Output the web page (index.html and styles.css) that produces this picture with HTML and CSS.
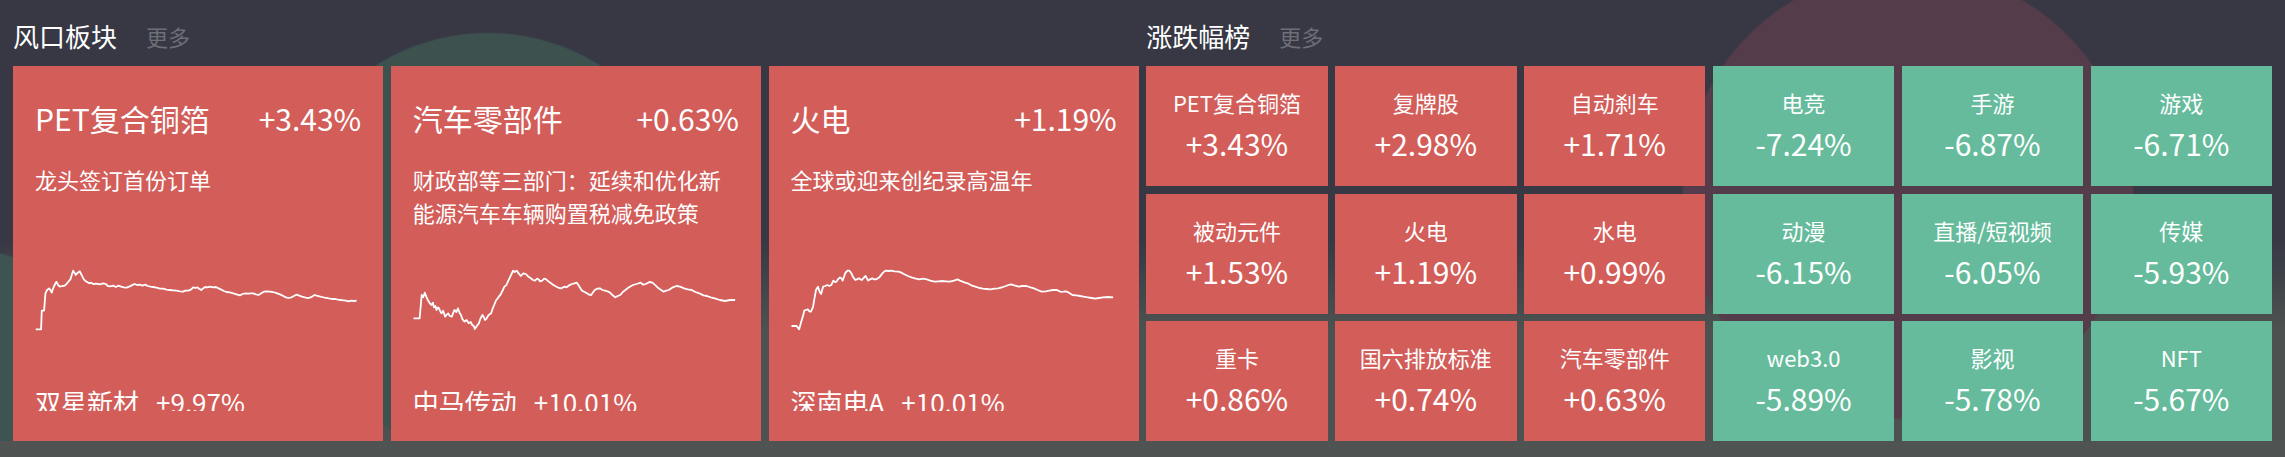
FILE: index.html
```html
<!DOCTYPE html>
<html lang="zh-CN">
<head>
<meta charset="utf-8">
<title>板块</title>
<link rel="stylesheet" href="styles.css">
</head>
<body>
<div class="board">
  <section class="half">
    <header class="head"><h2 class="head-title">风口板块</h2><a class="head-more">更多</a></header>
    <div class="cards">
      <article class="card">
        <div class="card-body">
          <div class="card-top"><span>PET复合铜箔</span><span>+3.43%</span></div>
          <p class="card-news">龙头签订首份订单</p>
          <svg class="card-chart" viewBox="105.75 60 978 240" preserveAspectRatio="none"><polyline points="108,268 124,268 126,212 133,212 137,160 142,150 148,145 152,150 156,158 160,145 166,132 170,125 175,135 180,140 188,138 195,137 202,130 208,122 212,118 216,105 220,92 224,98 228,105 232,100 236,97 240,94 244,102 248,110 252,118 256,122 262,126 268,130 274,128 280,132 290,131 300,133 310,130 318,132 324,138 332,139 340,137 348,141 356,137 364,140 372,142 380,143 388,140 396,136 404,132 412,135 420,134 428,137 436,134 444,138 452,140 460,141 470,143 480,146 490,146 500,149 510,150 520,151 530,152 540,154 550,155 556,152 566,152 574,148 580,142 586,144 592,142 598,146 604,150 610,145 616,141 622,142 630,140 640,142 648,141 656,145 664,149 672,153 680,156 690,157 700,160 710,163 720,166 728,162 736,160 744,161 752,160 760,160 768,163 776,165 784,160 792,155 800,154 810,155 818,156 826,158 834,161 842,164 850,168 858,172 866,174 874,172 882,168 890,164 898,167 906,170 914,172 922,174 930,173 938,169 944,165 950,167 958,169 966,171 974,173 982,174 990,176 998,177 1006,177 1014,179 1022,180 1030,181 1038,182 1046,184 1054,182 1062,183 1070,182"/></svg>
          <div class="card-stock"><span>双星新材</span><span>+9.97%</span></div>
        </div>
      </article>
      <article class="card">
        <div class="card-body">
          <div class="card-top"><span>汽车零部件</span><span>+0.63%</span></div>
          <p class="card-news">财政部等三部门：延续和优化新能源汽车车辆购置税减免政策</p>
          <svg class="card-chart" viewBox="809 120 639 240" preserveAspectRatio="none"><polyline points="810,295 822,295 826,225 829,232 832,218 835,230 838,240 842,250 845,255 848,248 850,262 853,258 855,270 858,262 860,265 863,276 865,280 868,272 872,290 875,284 878,280 881,288 885,290 888,278 890,270 894,276 897,265 900,278 903,285 906,298 910,305 914,300 918,310 922,306 925,315 928,318 930,327 934,318 938,310 941,296 945,285 948,292 950,300 953,296 955,290 958,284 962,280 965,266 968,255 972,240 975,235 978,228 980,225 983,216 985,210 988,200 992,195 995,184 998,175 1002,162 1005,152 1008,156 1012,152 1016,160 1020,168 1025,160 1030,162 1035,170 1040,175 1044,180 1048,182 1052,176 1055,178 1058,184 1062,182 1066,176 1070,178 1074,184 1078,188 1084,195 1090,200 1095,204 1100,205 1105,200 1110,202 1115,196 1120,192 1125,190 1130,188 1135,200 1140,212 1145,216 1150,220 1154,224 1158,225 1162,216 1165,210 1170,206 1175,205 1180,210 1185,212 1190,214 1195,218 1200,226 1205,232 1210,228 1215,225 1220,216 1225,210 1232,202 1240,195 1247,192 1255,188 1260,194 1265,192 1272,186 1278,188 1284,196 1290,205 1295,210 1300,215 1305,212 1310,210 1318,202 1325,198 1332,200 1340,205 1347,208 1355,210 1362,216 1370,220 1378,226 1385,228 1392,232 1400,235 1410,240 1420,243 1430,240 1440,240"/></svg>
          <div class="card-stock"><span>中马传动</span><span>+10.01%</span></div>
        </div>
      </article>
      <article class="card">
        <div class="card-body">
          <div class="card-top"><span>火电</span><span>+1.19%</span></div>
          <p class="card-news">全球或迎来创纪录高温年</p>
          <svg class="card-chart" viewBox="79 120 639 240" preserveAspectRatio="none"><polyline points="80,318 90,318 95,328 100,300 103,285 105,272 108,270 112,268 115,274 118,275 120,268 122,262 125,235 128,210 130,205 132,200 135,215 138,222 140,210 142,200 146,198 150,195 154,198 158,195 160,188 162,182 165,186 168,185 171,178 175,172 178,176 180,182 183,170 185,160 188,154 190,152 193,152 195,155 198,162 200,170 203,176 205,180 208,178 212,175 215,178 218,180 221,174 225,168 228,176 230,182 234,178 238,175 242,178 245,178 248,176 252,172 255,166 258,160 262,154 265,152 270,153 275,152 282,154 290,155 295,158 300,162 308,168 315,172 322,175 330,178 338,176 345,178 352,182 360,185 368,184 375,183 382,184 390,185 398,182 405,178 410,182 415,185 420,188 425,190 432,196 440,200 448,204 455,206 462,207 470,208 478,206 485,205 492,202 500,198 505,195 510,193 518,197 525,200 532,198 540,198 548,202 555,205 562,210 570,215 578,214 585,212 592,210 600,210 605,214 610,216 615,214 620,215 625,220 630,225 638,226 645,228 652,230 660,232 668,234 675,236 682,234 690,232 700,231 710,232"/></svg>
          <div class="card-stock"><span>深南电A</span><span>+10.01%</span></div>
        </div>
      </article>
    </div>
  </section>
  <section class="half">
    <header class="head"><h2 class="head-title">涨跌幅榜</h2><a class="head-more">更多</a></header>
    <div class="tiles">
      <div class="tile up"><span class="tile-name">PET复合铜箔</span><span class="tile-pct">+3.43%</span></div>
      <div class="tile up"><span class="tile-name">复牌股</span><span class="tile-pct">+2.98%</span></div>
      <div class="tile up"><span class="tile-name">自动刹车</span><span class="tile-pct">+1.71%</span></div>
      <div class="tile down"><span class="tile-name">电竞</span><span class="tile-pct">-7.24%</span></div>
      <div class="tile down"><span class="tile-name">手游</span><span class="tile-pct">-6.87%</span></div>
      <div class="tile down"><span class="tile-name">游戏</span><span class="tile-pct">-6.71%</span></div>
      <div class="tile up"><span class="tile-name">被动元件</span><span class="tile-pct">+1.53%</span></div>
      <div class="tile up"><span class="tile-name">火电</span><span class="tile-pct">+1.19%</span></div>
      <div class="tile up"><span class="tile-name">水电</span><span class="tile-pct">+0.99%</span></div>
      <div class="tile down"><span class="tile-name">动漫</span><span class="tile-pct">-6.15%</span></div>
      <div class="tile down"><span class="tile-name">直播/短视频</span><span class="tile-pct">-6.05%</span></div>
      <div class="tile down"><span class="tile-name">传媒</span><span class="tile-pct">-5.93%</span></div>
      <div class="tile up"><span class="tile-name">重卡</span><span class="tile-pct">+0.86%</span></div>
      <div class="tile up"><span class="tile-name">国六排放标准</span><span class="tile-pct">+0.74%</span></div>
      <div class="tile up"><span class="tile-name">汽车零部件</span><span class="tile-pct">+0.63%</span></div>
      <div class="tile down"><span class="tile-name">web3.0</span><span class="tile-pct">-5.89%</span></div>
      <div class="tile down"><span class="tile-name">影视</span><span class="tile-pct">-5.78%</span></div>
      <div class="tile down"><span class="tile-name">NFT</span><span class="tile-pct">-5.67%</span></div>
    </div>
  </section>
</div>
</body>
</html>
```
FILE: styles.css
```css
* { box-sizing: border-box; }
html, body { margin: 0; padding: 0; }
body {
  width: 2285px;
  height: 457px;
  overflow: hidden;
  background: #4f5351;
  color: #ffffff;
  font-family: "Noto Sans CJK SC", "Noto Sans", sans-serif;
}
.board {
  display: flex;
  gap: 7.5px;
  height: 441px;
  padding: 0 13px;
  background:
    radial-gradient(circle at 1908px 194px, #543c4a 0 224px, rgba(84, 60, 74, 0) 226px),
    radial-gradient(circle at 488px 243px, #3d524f 0 209px, rgba(61, 82, 79, 0) 211px),
    radial-gradient(circle at -40px 430px, #3e5450 0 180px, rgba(62, 84, 80, 0) 182px),
    linear-gradient(#373844 0, #373844 240px, #4d5250 330px);
}
.half {
  flex: 1;
  min-width: 0;
  min-height: 0;
  display: flex;
  flex-direction: column;
}
.head {
  flex: 0 0 66px;
  height: 66px;
  padding-top: 18px;
  display: flex;
  align-items: flex-start;
}
.head-title {
  margin: 0;
  font-size: 26px;
  font-weight: 400;
  line-height: 36px;
  color: #ffffff;
}
.head-more {
  margin-left: 29px;
  font-size: 22px;
  line-height: 36px;
  color: #6d6f77;
}
.cards {
  flex: 1 1 0;
  min-height: 0;
  display: grid;
  grid-template-columns: repeat(3, minmax(0, 1fr));
  grid-template-rows: minmax(0, 1fr);
  gap: 7.5px;
}
.card {
  min-height: 0;
  background: #d25d59;
  padding: 30px 22px;
  overflow: hidden;
}
.card-body {
  height: 100%;
  overflow: hidden;
}
.card-top {
  display: flex;
  justify-content: space-between;
  align-items: baseline;
  height: 44px;
  font-size: 30px;
  line-height: 44px;
}
.card-news {
  margin: 23px 0 0;
  height: 66px;
  font-size: 22px;
  line-height: 33px;
}
.card-chart {
  display: block;
  width: 100%;
  height: 80px;
  margin-top: 31px;
  overflow: visible;
}
.card-chart polyline {
  fill: none;
  stroke: #ffffff;
  stroke-width: 1.8px;
  stroke-linejoin: round;
  vector-effect: non-scaling-stroke;
}
.card-stock {
  display: flex;
  gap: 17px;
  margin-top: 42px;
  font-size: 26px;
  line-height: 39px;
  white-space: nowrap;
}
.tiles {
  flex: 1 1 0;
  min-height: 0;
  display: grid;
  grid-template-columns: repeat(6, minmax(0, 1fr));
  grid-template-rows: repeat(3, minmax(0, 1fr));
  gap: 7.5px;
}
.tile {
  display: flex;
  flex-direction: column;
  align-items: center;
  justify-content: center;
  gap: 4px;
  padding-bottom: 3px;
  white-space: nowrap;
}
.tile.up { background: #d25d59; }
.tile.down { background: #65bb9b; }
.tile-name {
  font-size: 22px;
  line-height: 33px;
}
.tile-pct {
  font-size: 30px;
  line-height: 40px;
}
```
